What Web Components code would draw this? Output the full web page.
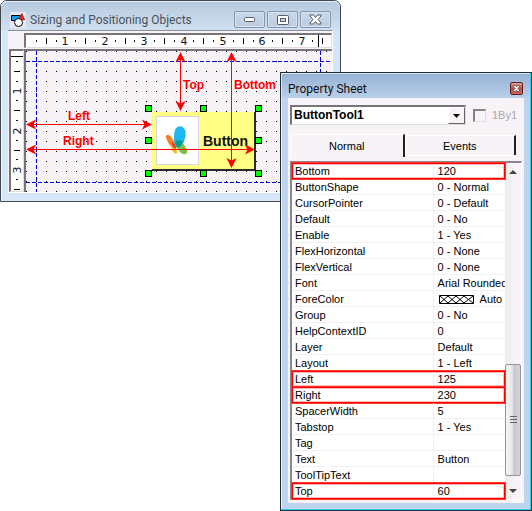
<!DOCTYPE html>
<html lang="en">
<head>
<meta charset="utf-8">
<title>Sizing and Positioning Objects</title>
<style>
html, body { margin: 0; background: #fff; }
body { font: 11px/16px "Liberation Sans", Arial, sans-serif; color: #000; }
</style>
</head>
<body>
<desk-top>
  <design-window slot="back" caption="Sizing and Positioning Objects"><design-editor></design-editor></design-window>
  <palette-window slot="front" caption="Property Sheet"><property-sheet></property-sheet></palette-window>
</desk-top>
<script>
const define = (name, html, setup) => customElements.define(name, class extends HTMLElement {
  constructor() {
    super();
    this.attachShadow({ mode: "open" }).innerHTML = html;
  }
  connectedCallback() { if (setup) setup(this, this.shadowRoot); }
});

const setCaption = (host, root) => { root.querySelector("h1").textContent = host.getAttribute("caption"); };

/* Document window with minimise, restore and close buttons */
define("design-window", `
<style>
:host { display: block; box-sizing: border-box; border: 1px solid #44474b; border-radius: 7px 7px 0 0; background: #d5e6f6; padding: 0 7px 8px; box-shadow: inset 1px 1px #eef6fd; }
header { display: flex; align-items: center; height: 21px; margin: 0 -7px; padding: 8px 9px 0; border-radius: 6px 6px 0 0; background: linear-gradient(#b5c9de, #d0e0f0); box-shadow: inset 0 1px #e3edf6; gap: 2px; }
h1 { flex: 1; min-width: 0; margin: 0 0 0 2px; font: 12px/16px Roboto, "Open Sans", sans-serif; color: #4a525c; white-space: nowrap; }
button { box-sizing: border-box; width: 31px; height: 17px; padding: 0; border: 1px solid #8795ad; border-radius: 2px; background: linear-gradient(#c9d8e9, #bccde1); box-shadow: inset 0 0 0 1px #d7e3f0; display: grid; place-items: center; }
svg { display: block; }
</style>
<header>
  <svg width="16" height="16" viewBox="0 0 16 16"><path fill="#e9e6f2" d="M0 0h16v16H0z"/><path d="M1.500 3.500h9v5h-9z" fill="#169ff0" stroke="#000"/><path d="M9 6l3-4.500 2 5 1 1-5 .5z" fill="#f21" stroke="#711" stroke-width=".7"/><circle cx="8.500" cy="10.500" r="4" fill="#fff" stroke="#000"/></svg>
  <h1></h1>
  <button aria-label="Minimize"><svg width="13" height="7"><rect x="1.500" y="1.500" width="10" height="4" rx="1" fill="#fff" stroke="#555d6a"/></svg></button>
  <button aria-label="Restore"><svg width="12" height="10"><rect x=".5" y=".5" width="11" height="9" rx="1" fill="#fff" stroke="#555d6a"/><rect x="3.500" y="3.500" width="5" height="3" fill="#c6d5e7" stroke="#555d6a"/></svg></button>
  <button aria-label="Close"><svg width="13" height="11"><path d="M1 1h3.500l2 2.500L8.500 1H12v1L9 5.500 12 9v1H8.500l-2-2.500L4.500 10H1V9l3-3.500L1 2z" fill="#fff" stroke="#555d6a"/></svg></button>
</header>
<slot></slot>`, setCaption);

/* Floating palette window with a close button */
define("palette-window", `
<style>
:host { display: block; box-sizing: border-box; border: 1px solid #222c36; background: #bed3ee; padding: 0 7px 7px; box-shadow: inset -1px -1px #35cdf3, inset 1px 0 #e6eff9; }
header { display: flex; align-items: center; height: 25px; padding: 0 7px; margin: 0 -6px 0 -7px; background: linear-gradient(#94b2d2, #b9cfea); box-shadow: inset 1px 1px #d9e6f3; }
h1 { flex: 1; margin: 6px 0 0; font: 12px/16px Roboto, "Open Sans", sans-serif; color: #111; }
button { box-sizing: border-box; width: 13px; height: 13px; margin-top: 6px; padding: 0; border: 1px solid #5a1f22; border-radius: 2px; background: linear-gradient(#e0a297, #bd4d40 50%, #c9685a); display: grid; place-items: center; }
svg { display: block; }
</style>
<header><h1></h1><button aria-label="Close"><svg width="9" height="9"><path d="M1.500 1.500h2l1 1.500 1-1.500h2v1L6 4.500l1.500 2v1h-2l-1-1.500-1 1.500h-2v-1l1.500-2-1.500-2z" fill="#fff" stroke="#5b4a52" stroke-width=".8"/></svg></button></header>
<slot></slot>`, setCaption);

/* Ruler numbered every 39.4 units of length, with ticks on each quarter */
define("ruler-bar", `
<style>
:host { display: block; box-sizing: border-box; border: 2px solid #77757a; border-right: 1px solid #ddd; border-bottom: 1px solid #ddd; background: #fff; overflow: hidden; }
svg { display: block; width: 100%; height: 100%; }
text { font: 11px "DejaVu Sans", sans-serif; text-anchor: middle; fill: #112; }
</style>
<svg shape-rendering="crispEdges"><g></g></svg>`, (host, root) => {
  const vertical = host.hasAttribute("vertical");
  const count = Number(host.getAttribute("count"));
  let out = "";
  for (let i = 1; i < count * 4; i++) {
    const at = Math.round(i * 39.4 / 4);
    const size = i % 2 ? 2 : 6;
    if (i % 4 === 0) {
      out += vertical ? `<text transform="translate(10 ${at + 1}) rotate(-90)">${i / 4}</text>` : `<text x="${at}" y="10">${i / 4}</text>`;
    } else {
      out += vertical ? `<path d="M${6 - size / 2} ${at + .5}h${size}" stroke="#000"/>` : `<path d="M${at + .5} ${6 - size / 2}v${size}" stroke="#000"/>`;
    }
  }
  out += vertical ? `<path d="M0 5.5h12" stroke="#000"/>` : `<path d="M292.500 0v12" stroke="#000"/>`;
  root.querySelector("g").innerHTML = out;
});

/* Button being designed, shown at its place on the canvas */
define("sample-button", `
<style>
:host { display: block; }
button { box-sizing: border-box; display: flex; align-items: center; gap: 4px; width: 104px; height: 59px; padding: 3px 4px; border: 0; background: #ffff84; border-right: 2px solid #2b2b2b; border-bottom: 2px solid #2b2b2b; font: bold 14px/18px "Liberation Sans", Arial, sans-serif; color: #111; }
svg { flex: none; box-sizing: border-box; background: #fff; border: 1px solid #d6d6dc; }
</style>
<button><svg width="43" height="49" viewBox="0 0 43 49">
<path d="M10 19c2-2 5 1 7 5 2 3 3 7 3 9-3 1-6-3-8-6-2-4-4-7-2-8z" fill="#f58220"/>
<path d="M17 27c2 2 4 7 4 11-3 1-6-3-6-7z" fill="#fdb913"/>
<path d="M16 26c2 1 4 5 4 7-2 0-5-3-4-7z" fill="#e6332a"/>
<path d="M20 27c3-3 7-1 9 3 2 3 4 6 2 8s-6 1-9-4c-2-2-3-5-2-7z" fill="#7dc242"/>
<path d="M24 9.500c4 0 7 4 6 10-1 6-4 12-8 12-3 0-5-6-4-12 0-6 2-10 6-10z" fill="#1fb8ee"/>
<path d="M19 26c3-3 6-2 8.500 0-2 4-4 6-6.500 5.500-1-1-2-3-2-5.500z" fill="#00a08c"/>
</svg>Button</button>`);

/* Grid surface with margins, the selected object and its measurements */
define("design-canvas", `
<style>
:host { display: block; position: relative; box-sizing: border-box; border: 2px solid #77757a; border-right: 0; border-bottom: 0; background: #f7f3f7; overflow: hidden; }
svg { position: absolute; inset: 0; width: 100%; height: 100%; }
sample-button { position: absolute; left: 126px; top: 61px; }
span { position: absolute; font: bold 12px/16px "Liberation Sans", Arial, sans-serif; color: #f00; }
</style>
<svg shape-rendering="crispEdges">
  <defs><pattern id="dots" width="10" height="10" patternUnits="userSpaceOnUse"><path d="M0 0h1v1H0z"/></pattern></defs>
  <rect width="100%" height="100%" fill="url(#dots)"/>
  <g stroke="#00d" stroke-dasharray="4 2">
    <line x1="0" x2="100%" y1="10.500" y2="10.500"/><line x1="0" x2="100%" y1="131.500" y2="131.500"/>
    <line x1="10.500" x2="10.500" y1="0" y2="100%"/>
    <line x1="100%" x2="100%" y1="0" y2="100%" transform="translate(-11.500)"/>
  </g>
</svg>
<sample-button></sample-button>
<svg>
  <defs><path id="head" d="M0 0l10-5-2.500 5L10 5z"/></defs>
  <g id="handles" fill="#0f0" stroke="#000" shape-rendering="crispEdges"></g>
  <g stroke="#f00" shape-rendering="crispEdges"><path d="M5 73.500h115M5 98.500h218M154.500 5v50M205.500 5v107" fill="none"/></g>
  <g fill="#f00">
    <use href="#head" transform="translate(0 73.500)"/><use href="#head" transform="translate(126 73.500) rotate(180)"/>
    <use href="#head" transform="translate(0 98.500)"/><use href="#head" transform="translate(229 98.500) rotate(180)"/>
    <use href="#head" transform="translate(154.500 1) rotate(90)"/><use href="#head" transform="translate(154.500 60) rotate(-90)"/>
    <use href="#head" transform="translate(205.500 1) rotate(90)"/><use href="#head" transform="translate(205.500 117) rotate(-90)"/>
  </g>
</svg>
<span style="left:157px;top:26px">Top</span>
<span style="left:208px;top:26px">Bottom</span>
<span style="left:42px;top:57px">Left</span>
<span style="left:37px;top:82px">Right</span>`, (host, root) => {
  let out = "";
  for (const y of [55, 87, 120]) for (const x of [119, 174, 229]) {
    if (x !== 174 || y !== 87) out += `<rect x="${x + .5}" y="${y - .5}" width="6" height="6"/>`;
  }
  root.querySelector("#handles").innerHTML = out;
});

define("design-editor", `
<style>
:host { display: grid; grid-template-columns: 16px minmax(0, 1fr); grid-template-rows: 15px 143px; row-gap: 1px; padding-top: 2px; background: #f7f3f7; border-top: 1px solid #8c9098; border-right: 1px solid #fff; border-bottom: 1px solid #fff; }
.across { grid-column: 2; }
.down { margin-left: 1px; }
</style>
<ruler-bar class="across" count="8"></ruler-bar>
<ruler-bar class="down" vertical count="4"></ruler-bar>
<design-canvas></design-canvas>`);

/* Two column list of property names and values */
define("property-grid", `
<style>
:host { display: grid; grid-template-columns: minmax(0, 1fr) 16px; border: 2px solid #8a888c; border-right: 1px solid #fff; border-bottom: 1px solid #fff; background: #fff; }
table { width: 100%; table-layout: fixed; border-collapse: separate; border-spacing: 0; }
th, td { box-sizing: border-box; height: 16px; padding: 1px 0 0 3px; font: 11px/14px "Liberation Sans", Arial, sans-serif; text-align: left; border-bottom: 1px solid #f3f0f3; white-space: nowrap; overflow: hidden; }
th { width: 66%; }
td { padding-left: 4px; border-left: 1px solid #f3f0f3; }
tr { position: relative; }
tr.marked th::after { content: ""; position: absolute; inset: 0; border: 1px solid #f00; outline: 1px solid #f33; box-shadow: inset 0 0 0 1px #fbb; }
.auto { display: flex; gap: 6px; align-items: center; padding-left: 1px; }
.auto svg { flex: none; }
.bar { display: flex; flex-direction: column; background: linear-gradient(90deg, #ececee, #f7f3f7 60%); }
.bar button { border: 0; padding: 0; background: none; height: 17px; display: grid; place-items: center; }
.track { flex: 1; display: flex; flex-direction: column; justify-content: flex-end; padding-bottom: 6px; }
.thumb { box-sizing: border-box; height: 38%; border: 1px solid #94949a; border-radius: 2px; background: linear-gradient(90deg, #f5f5f5, #e6e6e9 45%, #c9c9ce 55%, #d4d4d8); display: grid; place-items: center; }
svg { display: block; }
</style>
<table><tbody></tbody></table>
<div class="bar">
  <button aria-label="Scroll up"><svg width="8" height="4"><path d="M0 4l4-4 4 4z" fill="#444"/></svg></button>
  <div class="track"><div class="thumb"><svg width="7" height="8"><path d="M0 .5h7M0 3.500h7M0 6.500h7" stroke="#666"/></svg></div></div>
  <button aria-label="Scroll down"><svg width="8" height="4"><path d="M0 0l4 4 4-4z" fill="#444"/></svg></button>
</div>`, (host, root) => {
  const hatch = `<div class="auto"><svg width="35" height="9"><path d="M.5.5h34v8H.5zM1 1l8 7 8-7 8 7 9-7M1 8l8-7 8 7 8-7 9 7" fill="none" stroke="#000"/></svg>Auto</div>`;
  const rows = [["Bottom", "120", 1], ["ButtonShape", "0 - Normal"], ["CursorPointer", "0 - Default"], ["Default", "0 - No"], ["Enable", "1 - Yes"],
    ["FlexHorizontal", "0 - None"], ["FlexVertical", "0 - None"], ["Font", "Arial Rounded"], ["ForeColor", hatch], ["Group", "0 - No"],
    ["HelpContextID", "0"], ["Layer", "Default"], ["Layout", "1 - Left"], ["Left", "125", 1], ["Right", "230", 1], ["SpacerWidth", "5"],
    ["Tabstop", "1 - Yes"], ["Tag", ""], ["Text", "Button"], ["ToolTipText", ""], ["Top", "60", 1]];
  root.querySelector("tbody").innerHTML = rows.map(([name, value, marked]) =>
    `<tr${marked ? ' class="marked"' : ""}><th scope="row">${name}</th><td>${value}</td></tr>`).join("");
});

define("property-sheet", `
<style>
:host { display: block; background: #f7f3f7; padding: 7px 2px 3px; }
.target { display: flex; align-items: center; height: 20px; padding-right: 5px; }
.combo { flex: 1; min-width: 0; display: grid; grid-template-columns: minmax(0, 1fr) 17px; box-sizing: border-box; height: 20px; border: 2px solid #77757a; border-right: 1px solid #ddd; border-bottom: 1px solid #ddd; background: #fff; }
select { grid-area: 1 / 1 / 2 / 3; appearance: none; width: 100%; border: 0; padding: 0 2px; background: none; font: bold 12px/17px "Liberation Sans", Arial, sans-serif; color: #000; }
.arrow { grid-area: 1 / 2; pointer-events: none; display: grid; place-items: center; background: #f7f3f7; border: 1px solid; border-color: #fff #666 #666 #fff; }
label { display: flex; align-items: center; gap: 6px; margin-left: 7px; font-size: 11px; color: #aaa6aa; }
input { appearance: none; box-sizing: border-box; width: 13px; height: 13px; margin: 0; border: 2px solid #858387; border-right: 1px solid #e2dee2; border-bottom: 1px solid #e2dee2; background: #f7f3f7; }
nav { display: grid; grid-template-columns: 114fr 111fr; padding: 9px 6px 0 0; margin-bottom: 4px; align-items: end; }
nav button { box-sizing: border-box; height: 20px; border: 0; border-right: 2px solid #222; border-top: 1px solid #fff; border-left: 1px solid #fff; background: none; padding: 0; margin: 0 0 2px; font: 11px/16px "Liberation Sans", Arial, sans-serif; color: #000; }
nav button[aria-selected=true] { height: 23px; margin: 0; }
nav button + button { box-shadow: 0 1px #fff; }
</style>
<div class="target">
  <div class="combo"><select aria-label="Object"><option>ButtonTool1</option></select><span class="arrow"><svg width="7" height="4"><path d="M0 0h7L3.500 4z"/></svg></span></div>
  <label><input type="checkbox" disabled>1By1</label>
</div>
<nav role="tablist"><button role="tab" aria-selected="true">Normal</button><button role="tab" aria-selected="false">Events</button></nav>
<property-grid></property-grid>`);

/* Desktop on which the palette overlaps the document window */
define("desk-top", `
<style>
:host { display: grid; grid-template-columns: 280fr 61fr 191fr; align-items: start; }
slot { display: block; grid-row: 1; min-width: 0; }
slot[name=back] { grid-column: 1 / 3; z-index: 0; }
slot[name=front] { grid-column: 2 / 4; margin-top: 72px; z-index: 1; }
</style>
<slot name="back"></slot><slot name="front"></slot>`);
</script>
</body>
</html>
